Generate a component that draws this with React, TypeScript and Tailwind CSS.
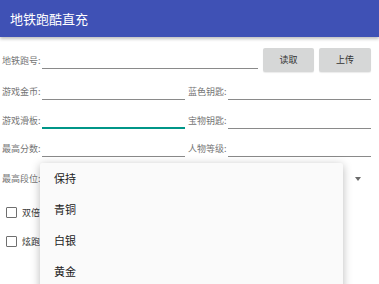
import React from 'react';

const font = { fontFamily: '"Noto Sans CJK SC", "Noto Sans", sans-serif' };

function Field({ label, focused, className = '' }: { label: string; focused?: boolean; className?: string }) {
  return (
    <div className={`flex items-center ${className}`}>
      <span className="w-[40px] shrink-0 text-[9px] leading-none text-[#757575] whitespace-nowrap">{label}</span>
      <div
        className={`flex-1 h-[17px] ${focused ? 'border-b-2 border-[#009688]' : 'border-b border-[#8a8a8a]'}`}
      />
    </div>
  );
}

function Check({ label }: { label: string }) {
  return (
    <div className="flex items-center gap-[5px] pl-[6px]">
      <div className="w-[11px] h-[11px] rounded-[1px] border-[1.5px] border-[#6f6f6f]" />
      <span className="text-[9px] leading-none text-[#333]">{label}</span>
    </div>
  );
}

export default function App() {
  const levels = ['保持', '青铜', '白银', '黄金'];

  return (
    <div className="relative w-[379px] h-[284px] overflow-hidden bg-white" style={font}>
      {/* Toolbar */}
      <div className="h-[37px] bg-[#3f51b5] flex items-center pl-[10px] shadow-[0_2px_3px_rgba(0,0,0,0.25)] relative z-10">
        <span className="text-white text-[13px] leading-none">地铁跑酷直充</span>
      </div>

      <div className="pt-[7px] pl-[2px] pr-[8px]">
        {/* Row 1 */}
        <div className="flex items-center h-[32px]">
          <Field label="地铁跑号:" className="flex-1" />
          <button className="ml-[5px] w-[51px] h-[24px] rounded-[2px] bg-[#d6d7d7] text-[9px] text-[#333] shadow-[0_1px_1px_rgba(0,0,0,0.08)]">
            读取
          </button>
          <button className="ml-[5px] w-[52px] h-[24px] rounded-[2px] bg-[#d6d7d7] text-[9px] text-[#333] shadow-[0_1px_1px_rgba(0,0,0,0.08)]">
            上传
          </button>
        </div>

        <div className="flex items-center h-[30px] gap-[3px]">
          <Field label="游戏金币:" className="w-[183px]" />
          <Field label="蓝色钥匙:" className="flex-1" />
        </div>
        <div className="flex items-center h-[28px] gap-[3px]">
          <Field label="游戏滑板:" focused className="w-[183px]" />
          <Field label="宝物钥匙:" className="flex-1" />
        </div>
        <div className="flex items-center h-[29px] gap-[3px]">
          <Field label="最高分数:" className="w-[183px]" />
          <Field label="人物等级:" className="flex-1" />
        </div>

        {/* Spinner row */}
        <div className="flex items-center h-[31px]">
          <span className="w-[40px] text-[9px] leading-none text-[#757575] whitespace-nowrap">最高段位:</span>
          <div className="flex-1 flex justify-end pr-[10px]">
            <svg width="6" height="4" viewBox="0 0 6 4">
              <polygon points="0,0 6,0 3,4" fill="#6b6b6b" />
            </svg>
          </div>
        </div>

        <div className="flex items-center h-[36px] -ml-[2px]">
          <Check label="双倍" />
        </div>
        <div className="flex items-center h-[22px] -ml-[2px]">
          <Check label="炫跑" />
        </div>
      </div>

      {/* Dropdown popup */}
      <div className="absolute left-[40px] top-[163px] w-[303px] h-[140px] bg-[#fafafa] rounded-[2px] shadow-[0_2px_10px_rgba(0,0,0,0.28)] z-20">
        {levels.map((lv) => (
          <div key={lv} className="h-[31px] flex items-center pl-[14px] text-[11px] leading-none text-[#212121]">
            {lv}
          </div>
        ))}
      </div>
    </div>
  );
}
